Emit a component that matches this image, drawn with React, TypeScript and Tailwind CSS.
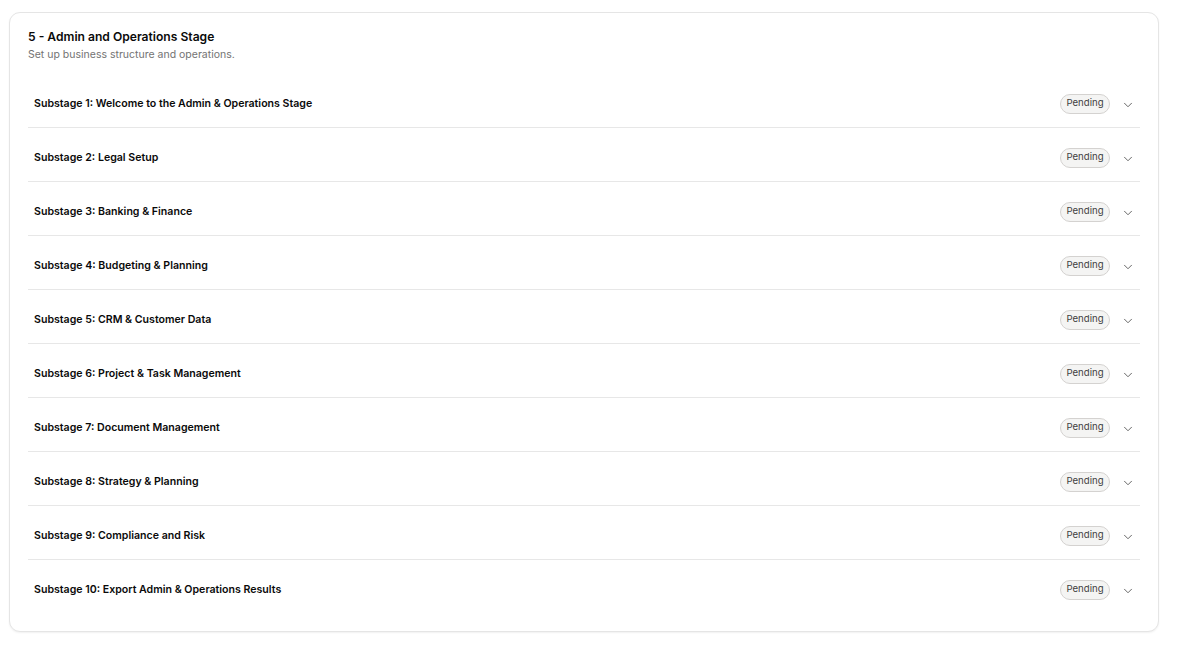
import React from "react";
import { ChevronDown } from "lucide-react";

const substages = [
  "Substage 1: Welcome to the Admin & Operations Stage",
  "Substage 2: Legal Setup",
  "Substage 3: Banking & Finance",
  "Substage 4: Budgeting & Planning",
  "Substage 5: CRM & Customer Data",
  "Substage 6: Project & Task Management",
  "Substage 7: Document Management",
  "Substage 8: Strategy & Planning",
  "Substage 9: Compliance and Risk",
  "Substage 10: Export Admin & Operations Results",
];

export default function App() {
  return (
    <div
      className="min-h-screen bg-white pl-[9px] pt-[12px]"
      style={{ fontFamily: "Inter, 'Noto Sans', sans-serif" }}
    >
      <div className="w-[1150px] rounded-[11px] border border-[#e5e5e5] bg-white px-[18px] pt-[15px] pb-[18px] shadow-[0_1px_2px_rgba(0,0,0,0.06)]">
        <h2 className="text-[12.1px] font-semibold leading-[18px] text-[#0a0a0a]">
          5 - Admin and Operations Stage
        </h2>
        <p className="mt-[2px] text-[10.5px] leading-[14px] text-[#737373]">
          Set up business structure and operations.
        </p>
        <div className="mt-[12px] flex flex-col">
          {substages.map((s, i) => (
            <div
              key={s}
              className={
                "flex items-center justify-between pt-[6px] pl-[6px] pr-[5px] " +
                (i < substages.length - 1 ? "h-[54px] border-b border-[#e7e7e7]" : "h-[53px]")
              }
            >
              <span className="text-[10.6px] font-semibold leading-[16px] text-[#0a0a0a]">
                {s}
              </span>
              <div className="flex items-center gap-[11px]">
                <span className="flex h-[20px] w-[50px] items-center justify-center rounded-full border border-[#d4d2d0] bg-[#f4f4f3] text-[9.6px] font-normal text-[#404040]">
                  Pending
                </span>
                <ChevronDown size={14} strokeWidth={1.5} className="mt-[2px] text-[#525252]" />
              </div>
            </div>
          ))}
        </div>
      </div>
    </div>
  );
}
